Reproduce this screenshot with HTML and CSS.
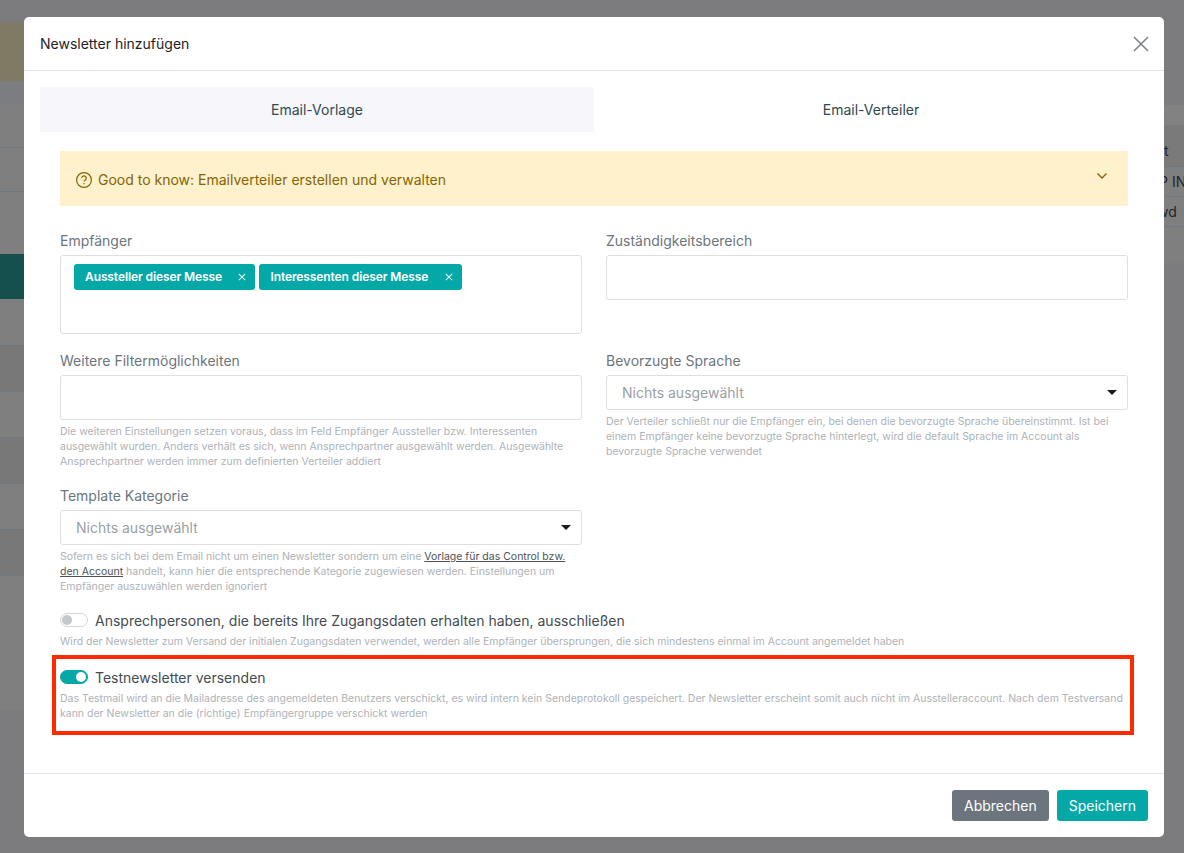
FILE: index.html
```html
<!DOCTYPE html>
<html lang="de">
<head>
<meta charset="utf-8">
<title>Newsletter hinzufügen</title>
<link rel="stylesheet" href="styles.css">
</head>
<body>
<div class="backdrop">
  <div class="bg-left">
    <div class="bl bl-tan"></div>
    <div class="bl bl-band"></div>
    <div class="bl row h43"></div>
    <div class="bl row h44"></div>
    <div class="bl h62"></div>
    <div class="bl bl-teal"></div>
    <div class="bl row h47"></div>
    <div class="bl row dark h46"></div>
    <div class="bl row h46"></div>
    <div class="bl row dark h46"></div>
    <div class="bl row h46"></div>
    <div class="bl row dark h46"></div>
    <div class="bl h134"></div>
  </div>
  <div class="bg-right">
    <div class="br-band"></div>
    <div class="br-row br-first"><span class="br-t">t</span></div>
    <div class="br-row"><span class="br-p">P IN</span></div>
    <div class="br-row"><span class="br-w">wd</span></div>
    <div class="br-foot"></div>
  </div>
</div>
<main class="modal">
  <header class="modal-head">
    <h1 class="modal-title">Newsletter hinzufügen</h1>
    <svg class="close" width="16" height="16" viewBox="0 0 16 16"><path d="M1 1l14 14M15 1L1 15" stroke="#7b8085" stroke-width="1.5" fill="none"/></svg>
  </header>
  <div class="modal-body">
    <nav class="tabs">
      <div class="tab tab-inactive">Email-Vorlage</div>
      <div class="tab tab-active">Email-Verteiler</div>
    </nav>
    <div class="pane">
      <div class="alert">
        <span class="alert-text">
          <svg class="alert-icon" width="16" height="16" viewBox="0 0 16 16"><circle cx="8" cy="8" r="7.4" stroke="#856404" stroke-width="1.2" fill="none"/><path d="M5.8 6.1a2.2 2.2 0 1 1 3.4 1.8c-.8.5-1.2.9-1.2 1.7" stroke="#856404" stroke-width="1.2" fill="none"/><circle cx="8" cy="11.8" r=".8" fill="#856404"/></svg>Good to know: Emailverteiler erstellen und verwalten
        </span>
        <svg class="alert-chev" width="12" height="8" viewBox="0 0 12 8"><path d="M1.5 1.5L6 6l4.5-4.5" stroke="#856404" stroke-width="1.4" fill="none"/></svg>
      </div>
      <div class="form-grid">
        <div class="field">
          <label class="label">Empfänger</label>
          <div class="tagbox">
            <span class="tag">Aussteller dieser Messe<svg class="tag-x" width="8" height="8" viewBox="0 0 8 8"><path d="M.8.8l6.4 6.4M7.2.8L.8 7.2" stroke="#e4f6f5" stroke-width="1.1" fill="none"/></svg></span>
            <span class="tag">Interessenten dieser Messe<svg class="tag-x" width="8" height="8" viewBox="0 0 8 8"><path d="M.8.8l6.4 6.4M7.2.8L.8 7.2" stroke="#e4f6f5" stroke-width="1.1" fill="none"/></svg></span>
          </div>
        </div>
        <div class="field">
          <label class="label">Zuständigkeitsbereich</label>
          <div class="input"></div>
        </div>
        <div class="field">
          <label class="label">Weitere Filtermöglichkeiten</label>
          <div class="input"></div>
          <p class="help">Die weiteren Einstellungen setzen voraus, dass im Feld Empfänger Aussteller bzw. Interessenten ausgewählt wurden. Anders verhält es sich, wenn Ansprechpartner ausgewählt werden. Ausgewählte Ansprechpartner werden immer zum definierten Verteiler addiert</p>
        </div>
        <div class="field">
          <label class="label">Bevorzugte Sprache</label>
          <div class="select"><span>Nichts ausgewählt</span><i class="caret"></i></div>
          <p class="help">Der Verteiler schließt nur die Empfänger ein, bei denen die bevorzugte Sprache übereinstimmt. Ist bei einem Empfänger keine bevorzugte Sprache hinterlegt, wird die default Sprache im Account als bevorzugte Sprache verwendet</p>
        </div>
        <div class="field">
          <label class="label">Template Kategorie</label>
          <div class="select"><span>Nichts ausgewählt</span><i class="caret"></i></div>
          <p class="help">Sofern es sich bei dem Email nicht um einen Newsletter sondern um eine <a class="help-link">Vorlage für das Control bzw. den Account</a> handelt, kann hier die entsprechende Kategorie zugewiesen werden. Einstellungen um Empfänger auszuwählen werden ignoriert</p>
        </div>
      </div>
      <div class="switch-row">
        <div class="switch-line"><span class="switch"><i class="knob"></i></span><span class="switch-label">Ansprechpersonen, die bereits Ihre Zugangsdaten erhalten haben, ausschließen</span></div>
        <p class="help">Wird der Newsletter zum Versand der initialen Zugangsdaten verwendet, werden alle Empfänger übersprungen, die sich mindestens einmal im Account angemeldet haben</p>
      </div>
      <div class="switch-row highlighted">
        <div class="switch-line"><span class="switch on"><i class="knob"></i></span><span class="switch-label">Testnewsletter versenden</span></div>
        <p class="help">Das Testmail wird an die Mailadresse des angemeldeten Benutzers verschickt, es wird intern kein Sendeprotokoll gespeichert. Der Newsletter erscheint somit auch nicht im Ausstelleraccount. Nach dem Testversand kann der Newsletter an die (richtige) Empfängergruppe verschickt werden</p>
      </div>
    </div>
  </div>
  <footer class="modal-foot">
    <button class="btn btn-grey">Abbrechen</button>
    <button class="btn btn-teal">Speichern</button>
  </footer>
</main>
</body>
</html>
```
FILE: styles.css
```css
* { box-sizing: border-box; }
html, body { margin: 0; height: 100%; }
body {
  background: #7c7c7e;
  font-family: Inter, "Liberation Sans", sans-serif;
  overflow: hidden;
  position: relative;
  height: 853px;
}
.backdrop { position: absolute; inset: 0; overflow: hidden; }
.bg-left { position: absolute; left: 0; top: 23px; width: 24px; }
.bl { background: #7f7f7f; }
.bl-tan { height: 58px; background: #7f7a64; }
.bl-band { height: 24px; background: #7c7d80; }
.row { border-bottom: 1px solid #6f7785; }
.dark { background: #787878; }
.h43 { height: 43px; } .h44 { height: 44px; } .h47 { height: 47px; } .h46 { height: 46px; }
.h62 { height: 62px; } .h134 { height: 134px; }
.bl-teal { height: 45px; background: #154f4e; }
.bg-right { position: absolute; left: 1164px; top: 105px; width: 20px; color: #232325; font-size: 14px; line-height: 30px; background: #7f7f7f; }
.br-band { height: 20px; background: #828283; }
.br-row { height: 30px; white-space: nowrap; border-bottom: 1px solid #6f7785; }
.br-first { height: 42px; padding-top: 11px; background: #7a7a7b; }
.br-p { margin-left: -5px; }
.br-w { margin-left: -7px; }
.br-foot { height: 36px; }
.modal {
  position: absolute; left: 24px; top: 17px; width: 1140px; height: 820px;
  background: #fff; border-radius: 5px; display: flex; flex-direction: column;
}
.modal-head {
  height: 54px; padding: 0 16px; border-bottom: 1px solid #e1e2e8;
  display: flex; align-items: center; justify-content: space-between;
}
.modal-title { margin: 0; font-size: 14px; font-weight: 400; color: #1f2326; }
.close { margin-right: -1px; }
.modal-body { flex: 1; padding: 16px 16px 0; }
.tabs { display: flex; height: 45px; }
.tab { flex: 1; display: flex; align-items: center; justify-content: center; font-size: 14px; color: #2f4a4e; }
.tab-inactive { background: #f6f6fb; }
.pane { padding: 19px 20px 0; }
.alert {
  height: 55px; background: #fff1cc; color: #856404; font-size: 14px;
  display: flex; align-items: center; justify-content: space-between; padding: 0 20px 0 16px;
}
.alert-text { display: flex; align-items: center; gap: 6px; padding-top: 2px; }
.alert-chev { margin-top: -5px; }
.form-grid { display: grid; grid-template-columns: 522px 522px; column-gap: 24px; row-gap: 18px; margin-top: 26px; }
.label { display: block; font-size: 14px; line-height: 18px; color: #6c757d; margin-bottom: 5px; }
.input { height: 45px; border: 1px solid #dedfe1; border-radius: 3px; background: #fff; }
.tagbox { height: 79px; border: 1px solid #dedfe1; border-radius: 3px; padding: 8px 13px; display: flex; gap: 4px; align-items: flex-start; }
.tag { height: 26px; background: #04a9a7; color: #fff; font-size: 12px; font-weight: 600; letter-spacing: -.1px; border-radius: 3px; padding: 0 9px 2px 11px; display: flex; align-items: center; white-space: nowrap; }
.tag-x { margin: 2px 0 0 16.5px; }
.select { height: 35px; border: 1px solid #dedfe1; border-radius: 3px; padding: 0 10px 0 15px; display: flex; align-items: center; justify-content: space-between; font-size: 14px; color: #9a9fa5; }
.caret { width: 0; height: 0; border-left: 5.5px solid transparent; border-right: 5.5px solid transparent; border-top: 5.5px solid #1a1a1a; }
.help { margin: 4px 0 0; font-size: 10.5px; line-height: 15px; color: #aeb2b8; }
.help-link { color: #4d5258; text-decoration: underline; }
.switch-row { margin-top: 17px; }
.switch-row .help { margin-top: 5px; }
.switch-line { display: flex; align-items: center; gap: 7px; height: 18px; }
.switch { width: 28px; height: 14px; border: 1px solid #d2d4d8; border-radius: 7px; position: relative; background: #fff; flex: none; }
.knob { position: absolute; left: 1px; top: 1px; width: 10px; height: 10px; border-radius: 50%; background: #c4c7cc; }
.switch.on { background: #04a9a7; border-color: #04a9a7; }
.switch.on .knob { left: auto; right: 1px; background: #fff; }
.switch-label { font-size: 14px; color: #454b52; white-space: nowrap; }
.highlighted { margin: 6px -6px 0 -8px; padding: 9px 4px 0; border: 4px solid #ff2a00; height: 80px; }
.modal-foot {
  height: 64px; border-top: 1px solid #e4e5e7; padding: 0 16px;
  display: flex; align-items: center; justify-content: flex-end; gap: 8px;
}
.btn { height: 31px; border: 0; border-radius: 3px; color: #fff; font: 400 14px Inter, "Liberation Sans", sans-serif; padding: 0 12px; }
.btn-grey { background: #6c757d; }
.btn-teal { background: #04a9a7; }
```
